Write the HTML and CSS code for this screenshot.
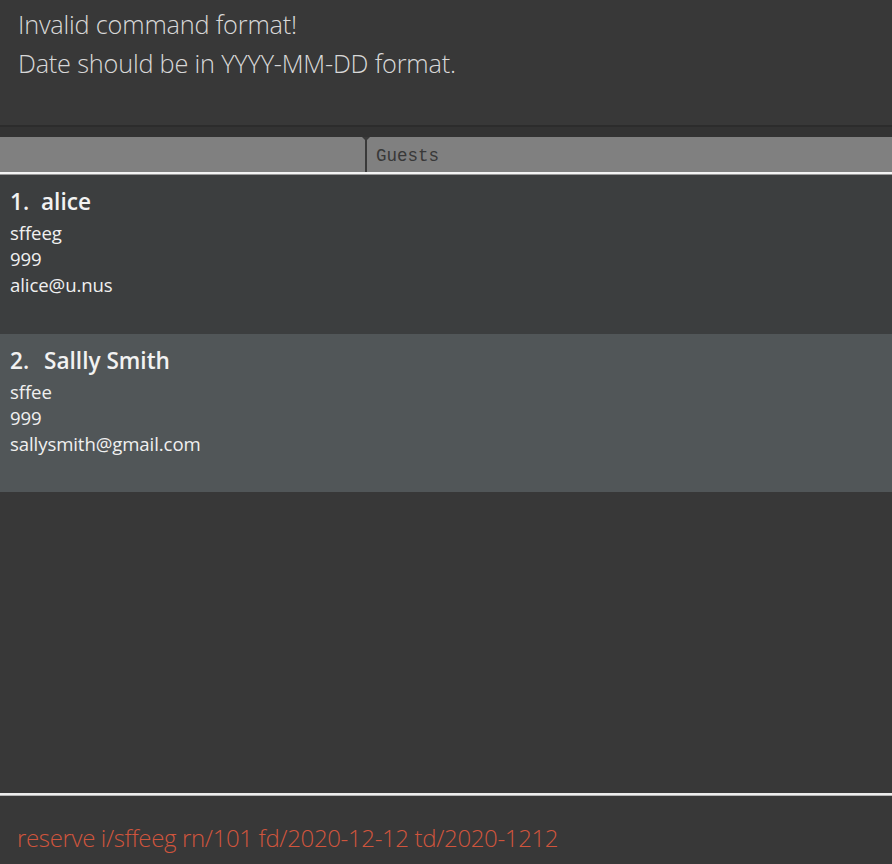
FILE: index.html
```html
<!DOCTYPE html>
<html>
<head>
<meta charset="utf-8">
<link rel="stylesheet" href="styles.css">
</head>
<body>
<div class="app">
  <div class="result">
    <div class="result-line">Invalid command format!</div>
    <div class="result-line">Date should be in YYYY-MM-DD format.</div>
  </div>
  <div class="strip"></div>
  <div class="tabs">
    <div class="tab tab-first"></div>
    <div class="tab tab-second"><span class="tab-label">Guests</span></div>
  </div>
  <div class="tab-rule"></div>
  <div class="list">
    <div class="card">
      <div class="card-name"><span class="card-index">1.</span>alice</div>
      <div class="card-field">sffeeg</div>
      <div class="card-field">999</div>
      <div class="card-field">alice@u.nus</div>
    </div>
    <div class="card card-selected">
      <div class="card-name"><span class="card-index">2.</span>Sallly Smith</div>
      <div class="card-field">sffee</div>
      <div class="card-field">999</div>
      <div class="card-field">sallysmith@gmail.com</div>
    </div>
    <div class="list-empty"></div>
  </div>
  <div class="command-rule"></div>
  <div class="command">
    <div class="command-text">reserve i/sffeeg rn/101 fd/2020-12-12 td/2020-1212</div>
  </div>
</div>
</body>
</html>
```

FILE: styles.css
```css
html, body {
  margin: 0;
  padding: 0;
  background: #383838;
}
.app {
  width: 892px;
  height: 864px;
  display: flex;
  flex-direction: column;
  font-family: "Open Sans", "Noto Sans", sans-serif;
  overflow: hidden;
}
.result {
  flex: none;
  height: 127px;
  box-sizing: border-box;
  background: #383838;
  border-bottom: 2px solid #2c2c2c;
  padding: 5px 0 0 18px;
}
.result-line {
  color: #d8d8d8;
  font-size: 25.3px;
  font-weight: 300;
  line-height: 39px;
  letter-spacing: -0.2px;
}
.strip {
  height: 10px;
  flex: none;
  background: #333333;
}
.tabs {
  height: 35px;
  flex: none;
  display: flex;
  background: #808080;
}
.tab-first {
  width: 365px;
  border-right: 2px solid #3a3a3a;
  position: relative;
}
.tab-first::after {
  content: "";
  position: absolute;
  right: -5px;
  top: 0;
  border-left: 4px solid transparent;
  border-right: 4px solid transparent;
  border-top: 4px solid #3a3a3a;
}
.tab-second {
  flex: 1;
  display: flex;
  align-items: center;
  padding-left: 9px;
}
.tab-label {
  font-family: "Liberation Mono", monospace;
  font-size: 17.5px;
  color: #383838;
  padding-top: 3px;
}
.tab-rule {
  height: 2px;
  flex: none;
  background: #f4f4f4;
  border-bottom: 1px solid #9a9a9a;
}
.list {
  flex: 1;
  display: flex;
  flex-direction: column;
  background: #383838;
}
.card {
  height: 159px;
  flex: none;
  box-sizing: border-box;
  padding: 12px 0 0 10px;
  background: #3c3e3f;
  color: #ffffff;
}
.card-selected {
  height: 158px;
  background: #515658;
}
.card-name {
  font-size: 22.6px;
  font-weight: 600;
  line-height: 30px;
  color: #f2f2f2;
  margin-bottom: 3px;
}
.card-index {
  display: inline-block;
  width: 31px;
}
.card-selected .card-index {
  width: 34px;
}
.card-field {
  font-size: 18.6px;
  line-height: 26px;
  color: #f0f0f0;
  letter-spacing: -0.1px;
}
.list-empty {
  flex: 1;
}
.command-rule {
  height: 3px;
  flex: none;
  background: linear-gradient(#dddddd, #ffffff 40%, #9a9a9a);
  box-shadow: 0 2px 2px #2a2a2a;
}
.command {
  height: 68px;
  flex: none;
  background: #383838;
  padding: 27px 0 0 17px;
  box-sizing: border-box;
}
.command-text {
  color: #d0553d;
  font-size: 24px;
  font-weight: 300;
  line-height: 30px;
  letter-spacing: -0.35px;
}
```
